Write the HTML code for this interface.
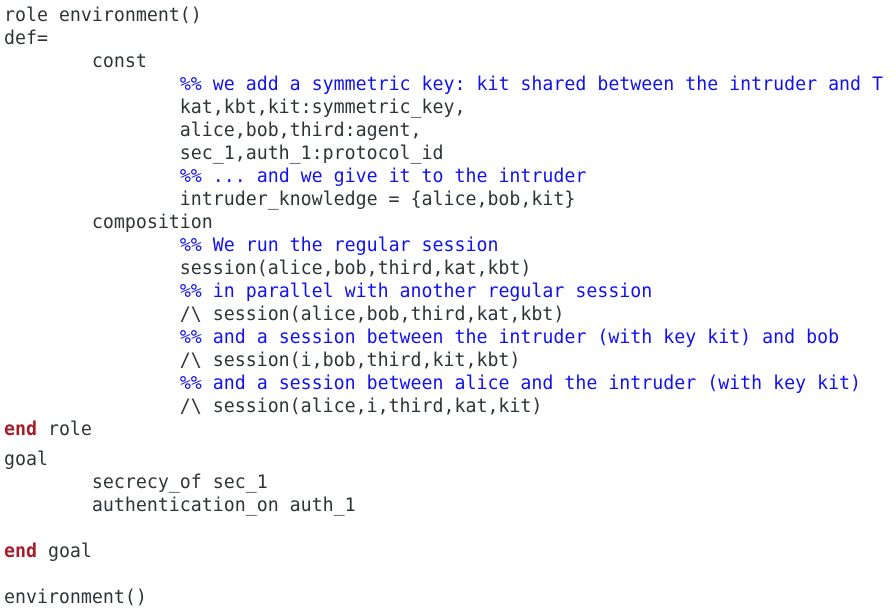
<!DOCTYPE html>
<html><head><style>
html,body{margin:0;padding:0;background:#fff;width:895px;height:614px;overflow:hidden}
pre{margin:0;position:absolute;left:4px;top:4px;font-family:"DejaVu Sans Mono","Liberation Mono",monospace;font-size:18.25px;line-height:23px;color:#2e3436;tab-size:8;white-space:pre}
.c{color:#1010f0}
.k{color:#a61c2a;font-weight:bold}
</style></head><body>
<pre>role environment()
def=
        const
                <span class="c">%% we add a symmetric key: kit shared between the intruder and T</span>
                kat,kbt,kit:symmetric_key,
                alice,bob,third:agent,
                sec_1,auth_1:protocol_id
                <span class="c">%% ... and we give it to the intruder</span>
                intruder_knowledge = {alice,bob,kit}
        composition
                <span class="c">%% We run the regular session</span>
                session(alice,bob,third,kat,kbt)
                <span class="c">%% in parallel with another regular session</span>
                /\ session(alice,bob,third,kat,kbt)
                <span class="c">%% and a session between the intruder (with key kit) and bob</span>
                /\ session(i,bob,third,kit,kbt)
                <span class="c">%% and a session between alice and the intruder (with key kit)</span>
                /\ session(alice,i,third,kat,kit)
<span class="k">end</span> role</pre>
<pre style="top:448px">goal
        secrecy_of sec_1
        authentication_on auth_1

<span class="k">end</span> goal

environment()</pre>
</body></html>
